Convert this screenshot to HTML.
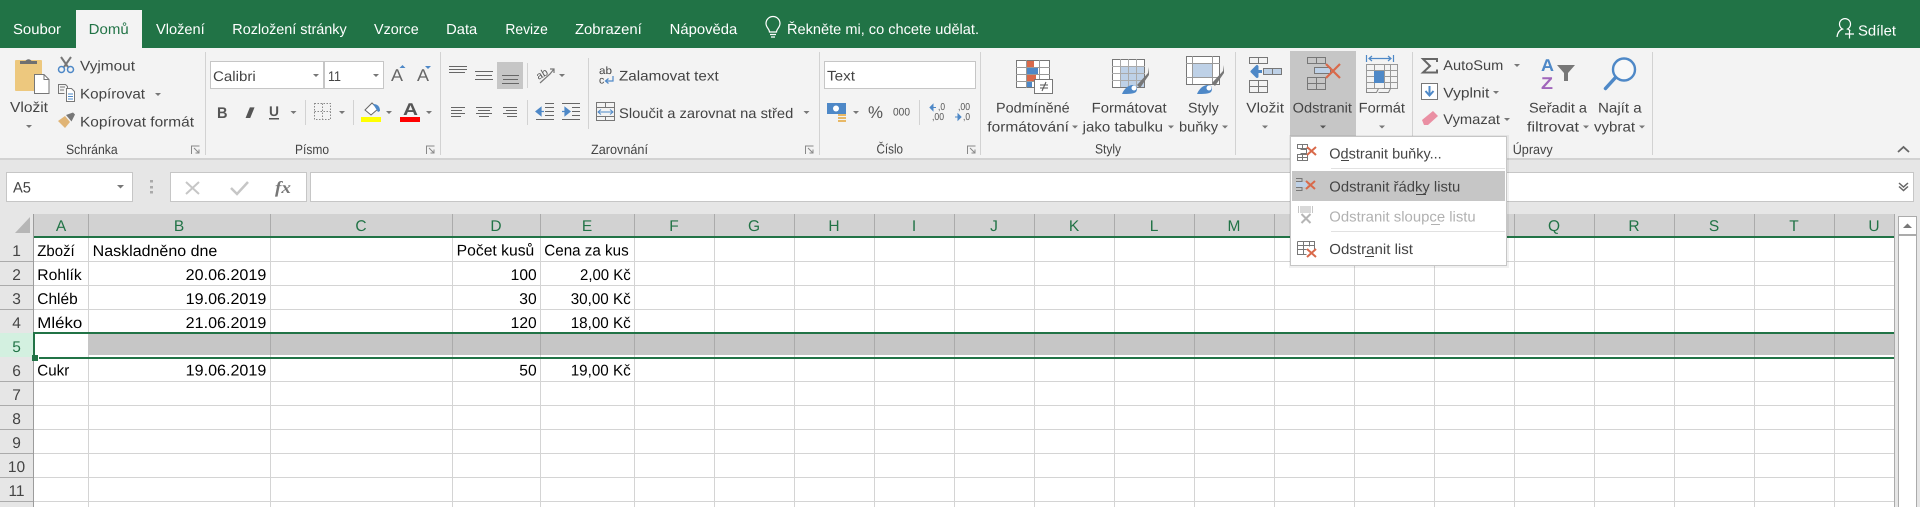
<!DOCTYPE html>
<html><head><meta charset="utf-8"><title>Excel</title>
<style>
html,body{margin:0;padding:0;background:#fff;overflow:hidden}
svg{display:block}
text{font-family:"Liberation Sans",sans-serif;font-size:14px;fill:#444}
.t{fill:#fff;font-size:14.5px}
.c{fill:#000;font-size:15.5px}
.h{fill:#217346;font-size:15.5px;text-anchor:middle}
.n{fill:#444;font-size:15.5px;text-anchor:middle}
.m{fill:#444;font-size:14.5px}
.g{fill:#777}
</style></head><body>
<svg xmlns="http://www.w3.org/2000/svg" width="1920" height="507" viewBox="0 0 1920 507" text-rendering="geometricPrecision">
<!-- title / tabs -->
<rect width="1920" height="507" fill="#fff"/>
<rect width="1920" height="48" fill="#217346"/>
<rect y="48" width="1920" height="111" fill="#f3f3f3"/>
<rect y="159" width="1920" height="55" fill="#e6e6e6"/>
<rect y="158" width="1920" height="2" fill="#d2d2d2"/>
<rect x="76" y="10" width="66" height="38" fill="#f3f3f3"/>
<text class="t" x="13" y="34" textLength="48" lengthAdjust="spacingAndGlyphs">Soubor</text>
<text class="t" x="88.7" y="34" textLength="40" lengthAdjust="spacingAndGlyphs" style="fill:#217346">Domů</text>
<text class="t" x="156" y="34" textLength="48.7" lengthAdjust="spacingAndGlyphs">Vložení</text>
<text class="t" x="232.3" y="34" textLength="114.4" lengthAdjust="spacingAndGlyphs">Rozložení stránky</text>
<text class="t" x="374" y="34" textLength="44.7" lengthAdjust="spacingAndGlyphs">Vzorce</text>
<text class="t" x="446.2" y="34" textLength="31" lengthAdjust="spacingAndGlyphs">Data</text>
<text class="t" x="505.4" y="34" textLength="42.4" lengthAdjust="spacingAndGlyphs">Revize</text>
<text class="t" x="575" y="34" textLength="66.8" lengthAdjust="spacingAndGlyphs">Zobrazení</text>
<text class="t" x="669.7" y="34" textLength="67.5" lengthAdjust="spacingAndGlyphs">Nápověda</text>
<text class="t" x="787" y="34" textLength="192" lengthAdjust="spacingAndGlyphs">Řekněte mi, co chcete udělat.</text>
<path d="M769.500 32c0-3-3.500-4.500-3.500-8.500a7 7 0 0 1 14 0c0 4-3.500 5.500-3.500 8.500zM770 34.500h6M771 37h4" fill="none" stroke="#fff" stroke-width="1.200"/>
<text class="t" x="1858" y="35.500" textLength="38" lengthAdjust="spacingAndGlyphs">Sdílet</text>
<path d="M1837 37c.5-4 2.500-7 5.500-8a5.500 5.500 0 1 1 5 0c1 .4 2 1 2.800 1.800M1845 34h9M1849.500 29.500v9" fill="none" stroke="#fff" stroke-width="1.200"/>

<!-- group separators -->
<g fill="#d2d2d2">
<rect x="205" y="52" width="1" height="103"/><rect x="440" y="52" width="1" height="103"/><rect x="819" y="52" width="1" height="103"/>
<rect x="980" y="52" width="1" height="103"/><rect x="1235" y="52" width="1" height="103"/><rect x="1412" y="52" width="1" height="103"/><rect x="1652" y="52" width="1" height="103"/>
<rect x="305" y="100" width="1" height="25"/><rect x="353" y="100" width="1" height="25"/>
<rect x="527" y="63" width="1" height="25"/><rect x="527" y="100" width="1" height="25"/><rect x="588" y="58" width="1" height="71"/><rect x="919" y="100" width="1" height="25"/>
</g>

<!-- Clipboard -->
<rect x="15" y="60" width="27" height="31" rx="1" fill="#edc87e"/>
<path d="M20 64v-3h5.500a3.500 3.500 0 0 1 6 0H37v3z" fill="#707070"/>
<path d="M34.500 74.500h9.500l5 5v14H34.500z" fill="#fff" stroke="#777"/>
<path d="M44 74.500v5h5" fill="none" stroke="#777"/>
<text x="10" y="112" textLength="38" lengthAdjust="spacingAndGlyphs" style="font-size:14.5px">Vložit</text>
<path d="M26 125h6l-3 3z" class="g"/>
<g fill="none">
<path d="M61 57l7 10M71 57l-7 10" stroke="#777" stroke-width="2"/>
<circle cx="61.500" cy="69.500" r="3" stroke="#4e88c7" stroke-width="1.500"/><circle cx="70.500" cy="69.500" r="3" stroke="#4e88c7" stroke-width="1.500"/>
<path d="M64.500 93.500h-6v-9h7l2 2v2" stroke="#777"/><path d="M60 87h5M60 90h4" stroke="#777"/>
<path d="M66.500 88.500h5l3 3v10h-8z" fill="#fff" stroke="#777"/><path d="M68 94h5M68 96.500h5M68 99h5" stroke="#4e88c7"/>
</g>
<path d="M58 121l7-5 5 6-5 6z" fill="#e0b475"/><path d="M66 115l7-2.500 2 2-3.500 7z" fill="#777"/>
<text x="80" y="70.500" textLength="55" lengthAdjust="spacingAndGlyphs">Vyjmout</text>
<text x="80" y="98.500" textLength="65" lengthAdjust="spacingAndGlyphs">Kopírovat</text>
<path d="M155 93h6l-3 3z" class="g"/>
<text x="80" y="126.500" textLength="114" lengthAdjust="spacingAndGlyphs">Kopírovat formát</text>
<text x="66" y="154" textLength="51.700" lengthAdjust="spacingAndGlyphs" style="font-size:13.500px">Schránka</text>
<path d="M191.500 154v-8h8M194 148l5 5m0-3.500v3.500h-3.500" fill="none" stroke="#888"/>

<!-- Font -->
<rect x="210.500" y="61.500" width="113" height="27" fill="#fff" stroke="#c6c6c6"/>
<rect x="324.500" y="61.500" width="59" height="27" fill="#fff" stroke="#c6c6c6"/>
<text x="213" y="81" textLength="42.700" lengthAdjust="spacingAndGlyphs">Calibri</text>
<text x="328" y="81" textLength="13" lengthAdjust="spacingAndGlyphs">11</text>
<path d="M313 74h6l-3 3zM373 74h6l-3 3z" class="g"/>
<text x="391" y="81" textLength="12" lengthAdjust="spacingAndGlyphs" style="font-size:17px;fill:#666">A</text>
<text x="417" y="81" textLength="12" lengthAdjust="spacingAndGlyphs" style="font-size:17px;fill:#666">A</text>
<path d="M399.500 68l3-3 3 3z" fill="#4e88c7"/><path d="M425 66h6l-3 3z" fill="#4e88c7"/>
<text x="217" y="118" textLength="10.500" lengthAdjust="spacingAndGlyphs" style="font-size:15.500px;font-weight:bold;fill:#555">B</text>
<text x="245" y="118" textLength="9" lengthAdjust="spacingAndGlyphs" style="font-size:15.500px;font-weight:bold;font-style:italic;fill:#555">I</text>
<text x="269" y="116" textLength="10" lengthAdjust="spacingAndGlyphs" style="font-size:14px;font-weight:bold;fill:#555">U</text>
<rect x="269" y="118" width="10" height="1.500" fill="#555"/>
<path d="M290.500 111h6l-3 3zM339 111h6l-3 3zM386 111h6l-3 3zM426 111h6l-3 3zM559 74h6l-3 3zM803.500 111h6l-3 3zM853 111h6l-3 3zM965 74h6l-3 3z" class="g"/>
<path d="M314.500 103.500h16v16h-16zM322.500 103.500v16M314.500 111.500h16" fill="none" stroke="#888" stroke-dasharray="1.500 1.500"/>
<path d="M365 110l7-7 6 6-7 6z" fill="#fff" stroke="#666"/><path d="M373 104c4 0 7 2 7 7l-2 1z" fill="#4e88c7"/>
<rect x="361" y="117" width="20" height="5" fill="#ffff00"/>
<text x="403" y="115" textLength="15" lengthAdjust="spacingAndGlyphs" style="font-size:17px;font-weight:bold;fill:#555">A</text>
<rect x="400" y="117" width="20" height="5" fill="#ff0000"/>
<text x="295" y="154" textLength="34" lengthAdjust="spacingAndGlyphs" style="font-size:13.500px">Písmo</text>
<path d="M426.500 154v-8h8M429 148l5 5m0-3.500v3.500h-3.500" fill="none" stroke="#888"/>

<!-- Alignment -->
<rect x="497" y="62" width="26" height="27" fill="#c6c6c6"/>
<g fill="none" stroke="#666">
<path d="M449 66.500h18M449 69.500h18M449 72.500h16"/>
<path d="M475 71.500h18M476 75.500h16M475 79.500h18"/>
<path d="M502 75.500h17M503 79.500h15M502 83.500h17"/>
<path d="M451 107.500h14M451 110.500h11M451 113.500h14M451 116.500h10"/>
<path d="M476 107.500h16M478 110.500h12M476 113.500h16M479 116.500h10"/>
<path d="M503 107.500h14M506 110.500h11M503 113.500h14M507 116.500h10"/>
<path d="M545 103.500h9M545 107.500h9M545 111.500h9M545 115.500h9M536 119.500h18"/>
<path d="M562 103.500h18M572 107.500h8M572 111.500h8M572 115.500h8M562 119.500h18"/>
<path d="M540 83l10-9 4-5m-4 0h4v4" stroke="#777" stroke-width="1.200"/>
</g>
<text x="536" y="78" transform="rotate(-30 541 74)" style="font-size:10.500px;fill:#555">ab</text>
<path d="M536 111.500h8M536 111.500l5-4v8z" fill="#4e88c7" stroke="#4e88c7" stroke-width="1.200"/>
<path d="M570 111.500h-8M570 111.500l-5-4v8z" fill="#4e88c7" stroke="#4e88c7" stroke-width="1.200"/>
<text x="599" y="74" textLength="13" lengthAdjust="spacingAndGlyphs" style="font-size:10.500px">ab</text>
<text x="599" y="83.500" style="font-size:10.500px">c</text>
<path d="M613 76v5h-7M608.500 78.500l-3 2.500 3 2.500" fill="none" stroke="#4e88c7" stroke-width="1.200"/>
<text x="619" y="80.700" textLength="99.700" lengthAdjust="spacingAndGlyphs">Zalamovat text</text>
<rect x="596.500" y="102.500" width="18" height="18" fill="none" stroke="#777"/>
<path d="M596.500 107.500h18M596.500 116.500h18M605.500 102.500v5M605.500 116.500v4" stroke="#777"/>
<path d="M598 112h15M601 109.500l-3 2.500 3 2.500M610 109.500l3 2.500-3 2.500" fill="none" stroke="#4e88c7"/>
<text x="619" y="118" textLength="174.300" lengthAdjust="spacingAndGlyphs">Sloučit a zarovnat na střed</text>
<text x="591" y="154" textLength="57" lengthAdjust="spacingAndGlyphs" style="font-size:13.500px">Zarovnání</text>
<path d="M805.500 154v-8h8M808 148l5 5m0-3.500v3.500h-3.500" fill="none" stroke="#888"/>

<!-- Number -->
<rect x="824.500" y="61.500" width="151" height="27" fill="#fff" stroke="#c6c6c6"/>
<text x="827" y="80.700" textLength="28" lengthAdjust="spacingAndGlyphs">Text</text>
<rect x="827" y="103" width="19" height="11" fill="#4e88c7"/><circle cx="836" cy="108.500" r="3" fill="#fff"/>
<path d="M838 115h8M838 118h8M838 121h8" stroke="#e8b866" stroke-width="2"/>
<text x="868" y="118" textLength="15" lengthAdjust="spacingAndGlyphs" style="font-size:17px;fill:#555">%</text>
<text x="893" y="115.700" textLength="17" lengthAdjust="spacingAndGlyphs" style="font-size:11px;fill:#555">000</text>
<text x="938" y="110" textLength="7" lengthAdjust="spacingAndGlyphs" style="font-size:10px;fill:#555">,0</text>
<text x="932" y="120" textLength="12" lengthAdjust="spacingAndGlyphs" style="font-size:10px;fill:#555">,00</text>
<path d="M930 107.500h6M930 107.500l3-3v6z" fill="#4e88c7" stroke="#4e88c7"/>
<text x="958" y="110" textLength="12" lengthAdjust="spacingAndGlyphs" style="font-size:10px;fill:#555">,00</text>
<text x="963" y="120" textLength="7" lengthAdjust="spacingAndGlyphs" style="font-size:10px;fill:#555">,0</text>
<path d="M955 117h6M961 117l-3-3v6z" fill="#4e88c7" stroke="#4e88c7"/>
<text x="876.500" y="153.500" textLength="26.500" lengthAdjust="spacingAndGlyphs" style="font-size:13.500px">Číslo</text>
<path d="M967.500 154v-8h8M970 148l5 5m0-3.500v3.500h-3.500" fill="none" stroke="#888"/>

<!-- Styles -->
<g>
<rect x="1016.500" y="60.500" width="33" height="27" fill="#fff" stroke="#777"/>
<rect x="1027" y="61" width="7" height="6" fill="#d9694a"/><rect x="1027" y="68" width="11" height="6" fill="#4e88c7"/><rect x="1027" y="75" width="9" height="6" fill="#d9694a"/><rect x="1027" y="82" width="5" height="5" fill="#4e88c7"/>
<path d="M1016 67.500h34M1016 74.500h34M1016 81.500h34M1026.500 60v28M1039.500 60v28" stroke="#999"/>
<rect x="1034.500" y="79.500" width="18" height="14" fill="#fff" stroke="#777"/>
<path d="M1040 85h8M1040 88h8M1046 82l-4 9" stroke="#555" fill="none"/>
<rect x="1112.500" y="59.500" width="32" height="28" fill="#fff" stroke="#777"/>
<rect x="1121" y="66" width="23" height="21" fill="#bed1e7"/>
<path d="M1112 66.500h33M1112 73.500h33M1112 80.500h33M1120.500 59v28M1128.500 59v28M1136.500 59v28" stroke="#aaa"/>
<path d="M1137 85l11-12 1-6v8l-9 13z" fill="#777"/>
<path d="M1122 94c2-5 6-9 11-9 4 0 5 4 3 7-2 2-8 2-14 2z" fill="#4e88c7"/><circle cx="1134" cy="88" r="2.500" fill="#fff"/>
<rect x="1186.500" y="56.500" width="33" height="28" fill="#fff" stroke="#777"/>
<rect x="1193" y="64" width="19" height="14" fill="#bed1e7"/>
<path d="M1186 63.500h34M1186 77.500h34M1192.500 56v28M1212.500 56v28" stroke="#999"/>
<path d="M1212 83l11-12 1-6v8l-9 13z" fill="#777"/>
<path d="M1197 94c2-5 6-9 11-9 4 0 5 4 3 7-2 2-8 2-14 2z" fill="#4e88c7"/><circle cx="1209" cy="88" r="2.500" fill="#fff"/>
</g>
<text x="996" y="112.300" textLength="73.700" lengthAdjust="spacingAndGlyphs">Podmíněné</text>
<text x="987.300" y="131.700" textLength="81.700" lengthAdjust="spacingAndGlyphs">formátování</text>
<text x="1091.700" y="112.300" textLength="75" lengthAdjust="spacingAndGlyphs">Formátovat</text>
<text x="1082.700" y="131.700" textLength="80.300" lengthAdjust="spacingAndGlyphs">jako tabulku</text>
<text x="1188" y="112.300" textLength="30.700" lengthAdjust="spacingAndGlyphs">Styly</text>
<text x="1179" y="131.700" textLength="39" lengthAdjust="spacingAndGlyphs">buňky</text>
<text x="1095" y="153.500" textLength="26" lengthAdjust="spacingAndGlyphs" style="font-size:13.500px">Styly</text>
<path d="M1072 125.500h6l-3 3zM1168 125.500h6l-3 3zM1222 125.500h6l-3 3z" class="g"/>

<!-- Cells -->
<rect x="1290" y="51" width="66" height="85" fill="#c6c6c6"/>
<g fill="none" stroke="#777">
<path d="M1249.500 57.500h18v6h-18zM1258.500 57.500v6"/>
<path d="M1263.500 68.500h18v6h-18z" fill="#bed1e7"/><path d="M1272.500 68.500v6"/>
<path d="M1249.500 80.500h18v12h-18zM1249.500 86.500h18M1258.500 80.500v12"/>
<path d="M1307.500 57.500h18v6h-18zM1316.500 57.500v6" />
<path d="M1314.500 67.500h16v6h-16z" fill="#bed1e7"/>
<path d="M1307.500 77.500h18v12h-18zM1307.500 83.500h18M1316.500 77.500v12"/>
<path d="M1366.500 64.500h31v24h-31zM1366.500 70.500h31M1366.500 76.500h31M1366.500 82.500h31M1374.500 64.500v24M1384.500 64.500v24M1390.500 64.500v24" stroke="#999"/>
<path d="M1366.500 88.500v4h10l2-4m4 0h8l-2 4h-10" stroke="#888"/>
</g>
<path d="M1262 71.500h-10M1252 71.500l5-5v10z" fill="#4e88c7" stroke="#4e88c7" stroke-width="3" stroke-linejoin="round"/>
<path d="M1326 64l14 14M1340 64l-14 14" stroke="#d9694a" stroke-width="2.200"/>
<rect x="1374" y="71" width="10" height="12" fill="#4e88c7"/>
<path d="M1366.500 55v7M1393.500 55v7M1369 58.500h22M1372 56l-3 2.500 3 2.500M1388 56l3 2.500-3 2.500" fill="none" stroke="#4e88c7" stroke-width="1.200"/>
<text x="1246.300" y="112.300" textLength="37.700" lengthAdjust="spacingAndGlyphs">Vložit</text>
<text x="1292.700" y="112.300" textLength="59.300" lengthAdjust="spacingAndGlyphs">Odstranit</text>
<text x="1358.700" y="112.300" textLength="46.300" lengthAdjust="spacingAndGlyphs">Formát</text>
<path d="M1262 125.500h6l-3 3zM1379 125.500h6l-3 3z" class="g"/>
<path d="M1320 125.500h6l-3 3z" fill="#555"/>

<!-- Editing -->
<path d="M1437 62v-3h-14l7 7-7 6.500h14v-3" fill="none" stroke="#666" stroke-width="2"/>
<text x="1443.300" y="70" textLength="60" lengthAdjust="spacingAndGlyphs">AutoSum</text>
<path d="M1514 64h6l-3 3z" class="g"/>
<rect x="1421.500" y="83.500" width="16" height="16" fill="#fff" stroke="#777"/>
<path d="M1429.500 86v9M1425.500 91l4 4.500 4-4.500" fill="none" stroke="#4e88c7" stroke-width="2"/>
<text x="1443.300" y="97.300" textLength="46" lengthAdjust="spacingAndGlyphs">Vyplnit</text>
<path d="M1493 91h6l-3 3z" class="g"/>
<path d="M1422 120l11-9 5 5-10 9h-4z" fill="#ea8fa3"/>
<text x="1443.300" y="124" textLength="56.700" lengthAdjust="spacingAndGlyphs">Vymazat</text>
<path d="M1504 118h6l-3 3z" class="g"/>
<text x="1541" y="71" textLength="13" lengthAdjust="spacingAndGlyphs" style="font-size:17px;font-weight:bold;fill:#4e88c7">A</text>
<text x="1541" y="89" textLength="12" lengthAdjust="spacingAndGlyphs" style="font-size:17px;font-weight:bold;fill:#a066bb">Z</text>
<path d="M1557 65h18l-7 8v8h-4v-8z" fill="#777"/>
<text x="1529" y="112.300" textLength="58" lengthAdjust="spacingAndGlyphs">Seřadit a</text>
<text x="1527" y="131.700" textLength="52" lengthAdjust="spacingAndGlyphs">filtrovat</text>
<path d="M1583 125.500h6l-3 3z" class="g"/>
<circle cx="1624" cy="69.500" r="11" fill="#fff" fill-opacity=".4" stroke="#4e88c7" stroke-width="2.400"/>
<path d="M1615.500 77.500l-10 11" stroke="#4e88c7" stroke-width="3.500" stroke-linecap="round"/>
<text x="1598" y="112.300" textLength="43.700" lengthAdjust="spacingAndGlyphs">Najít a</text>
<text x="1594" y="131.700" textLength="41" lengthAdjust="spacingAndGlyphs">vybrat</text>
<path d="M1639 125.500h6l-3 3z" class="g"/>
<text x="1512.700" y="154" textLength="40" lengthAdjust="spacingAndGlyphs" style="font-size:13.500px">Úpravy</text>
<path d="M1898 152l5.500-5 5.500 5" fill="none" stroke="#666" stroke-width="1.800"/>

<!-- formula bar -->
<rect x="6.500" y="172.500" width="126" height="29" fill="#fff" stroke="#c6c6c6"/>
<text x="13" y="192.700" textLength="18" lengthAdjust="spacingAndGlyphs" style="font-size:15px">A5</text>
<path d="M117 185h7l-3.500 3.500z" class="g"/>
<path d="M151.500 180v2.500M151.500 186v2.500M151.500 191v2.500" stroke="#aaa" stroke-width="3"/>
<rect x="170.500" y="172.500" width="136" height="29" fill="#fff" stroke="#c6c6c6"/>
<path d="M186 182l13 12M199 182l-13 12" stroke="#c6c6c6" stroke-width="2"/>
<path d="M231 188l6 6 11-12" fill="none" stroke="#c6c6c6" stroke-width="2.500"/>
<text x="275" y="193" textLength="16" lengthAdjust="spacingAndGlyphs" style="font-family:'Liberation Serif',serif;font-size:17px;font-style:italic;font-weight:bold;fill:#777">fx</text>
<rect x="310.500" y="172.500" width="1603" height="29" fill="#fff" stroke="#c6c6c6"/>
<path d="M1899 183l4.500 4 4.500-4M1899 186.500l4.500 4 4.500-4" fill="none" stroke="#666" stroke-width="1.500"/>

<!-- grid headers -->
<rect x="34" y="214" width="1860" height="22" fill="#d2d2d2"/>
<rect x="0" y="214" width="33" height="293" fill="#e6e6e6"/>
<rect x="33" y="214" width="1" height="293" fill="#9c9c9c"/>
<path d="M30 217v16H15z" fill="#b6b6b6"/>
<!-- vertical gridlines -->
<g fill="#d4d4d4">
<rect x="88" y="238" width="1" height="269"/><rect x="270" y="238" width="1" height="269"/><rect x="452" y="238" width="1" height="269"/><rect x="540" y="238" width="1" height="269"/><rect x="634" y="238" width="1" height="269"/>
<rect x="714" y="238" width="1" height="269"/><rect x="794" y="238" width="1" height="269"/><rect x="874" y="238" width="1" height="269"/><rect x="954" y="238" width="1" height="269"/><rect x="1034" y="238" width="1" height="269"/><rect x="1114" y="238" width="1" height="269"/><rect x="1194" y="238" width="1" height="269"/><rect x="1274" y="238" width="1" height="269"/><rect x="1354" y="238" width="1" height="269"/><rect x="1434" y="238" width="1" height="269"/><rect x="1514" y="238" width="1" height="269"/><rect x="1594" y="238" width="1" height="269"/><rect x="1674" y="238" width="1" height="269"/><rect x="1754" y="238" width="1" height="269"/><rect x="1834" y="238" width="1" height="269"/>
<rect x="34" y="261" width="1860" height="1"/><rect x="34" y="285" width="1860" height="1"/><rect x="34" y="309" width="1860" height="1"/><rect x="34" y="381" width="1860" height="1"/><rect x="34" y="405" width="1860" height="1"/><rect x="34" y="429" width="1860" height="1"/><rect x="34" y="453" width="1860" height="1"/><rect x="34" y="477" width="1860" height="1"/><rect x="34" y="501" width="1860" height="1"/>
</g>
<g fill="#ababab">
<rect x="88" y="214" width="1" height="22"/><rect x="270" y="214" width="1" height="22"/><rect x="452" y="214" width="1" height="22"/><rect x="540" y="214" width="1" height="22"/><rect x="634" y="214" width="1" height="22"/><rect x="714" y="214" width="1" height="22"/><rect x="794" y="214" width="1" height="22"/><rect x="874" y="214" width="1" height="22"/><rect x="954" y="214" width="1" height="22"/><rect x="1034" y="214" width="1" height="22"/><rect x="1114" y="214" width="1" height="22"/><rect x="1194" y="214" width="1" height="22"/><rect x="1274" y="214" width="1" height="22"/><rect x="1514" y="214" width="1" height="22"/><rect x="1594" y="214" width="1" height="22"/><rect x="1674" y="214" width="1" height="22"/><rect x="1754" y="214" width="1" height="22"/><rect x="1834" y="214" width="1" height="22"/>
<rect x="0" y="261" width="33" height="1"/><rect x="0" y="285" width="33" height="1"/><rect x="0" y="309" width="33" height="1"/><rect x="0" y="381" width="33" height="1"/><rect x="0" y="405" width="33" height="1"/><rect x="0" y="429" width="33" height="1"/><rect x="0" y="453" width="33" height="1"/><rect x="0" y="477" width="33" height="1"/><rect x="0" y="501" width="33" height="1"/>
</g>
<!-- row 5 selection -->
<rect x="0" y="333" width="33" height="24" fill="#d3f0e0"/>
<rect x="33" y="333" width="2" height="25" fill="#217346"/>
<rect x="88" y="334" width="1806" height="21" fill="#c6c6c6"/>
<g fill="#ababab"><rect x="270" y="334" width="1" height="21"/><rect x="452" y="334" width="1" height="21"/><rect x="540" y="334" width="1" height="21"/><rect x="634" y="334" width="1" height="21"/><rect x="714" y="334" width="1" height="21"/><rect x="794" y="334" width="1" height="21"/><rect x="874" y="334" width="1" height="21"/><rect x="954" y="334" width="1" height="21"/><rect x="1034" y="334" width="1" height="21"/><rect x="1114" y="334" width="1" height="21"/><rect x="1194" y="334" width="1" height="21"/><rect x="1274" y="334" width="1" height="21"/><rect x="1354" y="334" width="1" height="21"/><rect x="1434" y="334" width="1" height="21"/><rect x="1514" y="334" width="1" height="21"/><rect x="1594" y="334" width="1" height="21"/><rect x="1674" y="334" width="1" height="21"/><rect x="1754" y="334" width="1" height="21"/><rect x="1834" y="334" width="1" height="21"/></g>
<rect x="34" y="236" width="1860" height="2" fill="#217346"/>
<rect x="33" y="332" width="1861" height="2" fill="#217346"/>
<rect x="33" y="357" width="1861" height="2" fill="#217346"/>
<rect x="32" y="355" width="6" height="6" fill="#217346"/><rect x="38" y="357" width="1" height="2" fill="#fff"/>
<rect x="1894" y="214" width="1" height="293" fill="#ababab"/>

<text class="h" x="61" y="231">A</text><text class="h" x="179" y="231">B</text><text class="h" x="361" y="231">C</text><text class="h" x="496" y="231">D</text><text class="h" x="587" y="231">E</text><text class="h" x="674" y="231">F</text><text class="h" x="754" y="231">G</text><text class="h" x="834" y="231">H</text><text class="h" x="914" y="231">I</text><text class="h" x="994" y="231">J</text><text class="h" x="1074" y="231">K</text><text class="h" x="1154" y="231">L</text><text class="h" x="1234" y="231">M</text><text class="h" x="1554" y="231">Q</text><text class="h" x="1634" y="231">R</text><text class="h" x="1714" y="231">S</text><text class="h" x="1794" y="231">T</text><text class="h" x="1874" y="231">U</text>

<text class="n" x="16.500" y="256">1</text><text class="n" x="16.500" y="280">2</text><text class="n" x="16.500" y="304">3</text><text class="n" x="16.500" y="328">4</text><text class="n" x="16.500" y="352" style="fill:#217346">5</text><text class="n" x="16.500" y="376">6</text><text class="n" x="16.500" y="400">7</text><text class="n" x="16.500" y="424">8</text><text class="n" x="16.500" y="448">9</text><text class="n" x="16.500" y="472">10</text><text class="n" x="16.500" y="496">11</text>

<text class="c" x="37.300" y="256" textLength="37.400" lengthAdjust="spacingAndGlyphs">Zboží</text>
<text class="c" x="92.700" y="256" textLength="124.600" lengthAdjust="spacingAndGlyphs">Naskladněno dne</text>
<text class="c" x="456.700" y="255.500" textLength="77.600" lengthAdjust="spacingAndGlyphs">Počet kusů</text>
<text class="c" x="544.300" y="255.500" textLength="84.400" lengthAdjust="spacingAndGlyphs">Cena za kus</text>
<text class="c" x="37.300" y="280" textLength="44.400" lengthAdjust="spacingAndGlyphs">Rohlík</text>
<text class="c" x="185.700" y="280" textLength="80.600" lengthAdjust="spacingAndGlyphs">20.06.2019</text>
<text class="c" x="510.700" y="280" textLength="26" lengthAdjust="spacingAndGlyphs">100</text>
<text class="c" x="580" y="280" textLength="50.700" lengthAdjust="spacingAndGlyphs">2,00 Kč</text>
<text class="c" x="37.300" y="304" textLength="40.400" lengthAdjust="spacingAndGlyphs">Chléb</text>
<text class="c" x="185.700" y="304" textLength="80.600" lengthAdjust="spacingAndGlyphs">19.06.2019</text>
<text class="c" x="519.300" y="304" textLength="17.400" lengthAdjust="spacingAndGlyphs">30</text>
<text class="c" x="570.700" y="304" textLength="60" lengthAdjust="spacingAndGlyphs">30,00 Kč</text>
<text class="c" x="37.300" y="328" textLength="45" lengthAdjust="spacingAndGlyphs">Mléko</text>
<text class="c" x="185.700" y="328" textLength="80.600" lengthAdjust="spacingAndGlyphs">21.06.2019</text>
<text class="c" x="510.700" y="328" textLength="26" lengthAdjust="spacingAndGlyphs">120</text>
<text class="c" x="570.700" y="328" textLength="60" lengthAdjust="spacingAndGlyphs">18,00 Kč</text>
<text class="c" x="37.300" y="375.500" textLength="32" lengthAdjust="spacingAndGlyphs">Cukr</text>
<text class="c" x="185.700" y="375.500" textLength="80.600" lengthAdjust="spacingAndGlyphs">19.06.2019</text>
<text class="c" x="519.300" y="375.500" textLength="17.400" lengthAdjust="spacingAndGlyphs">50</text>
<text class="c" x="570.700" y="375.500" textLength="60" lengthAdjust="spacingAndGlyphs">19,00 Kč</text>

<!-- scrollbar -->
<rect x="1895" y="214" width="25" height="293" fill="#e6e6e6"/>
<rect x="1898.500" y="216.500" width="18" height="18" fill="#fff" stroke="#ababab"/>
<path d="M1903 228l4.500-4.500 4.500 4.500z" fill="#777"/>
<rect x="1898.500" y="235.500" width="18" height="280" fill="#fff" stroke="#ababab"/>

<!-- dropdown menu -->
<rect x="1289" y="135" width="220" height="133" fill="#000" fill-opacity=".06"/>
<rect x="1290.500" y="136.500" width="216" height="129" fill="#fff" stroke="#c6c6c6"/>
<rect x="1292" y="171" width="213" height="30" fill="#c6c6c6"/>
<rect x="1331" y="168" width="174" height="1" fill="#e1e1e1"/>
<rect x="1331" y="231" width="174" height="1" fill="#e1e1e1"/>
<rect x="1296" y="182" width="11" height="5" fill="#bed1e7"/>
<rect x="1300" y="206" width="11" height="7" fill="#d9d9d9"/>
<g fill="none" stroke="#777">
<path d="M1297.500 144.500h10v4h-10zM1302.500 144.500v4M1300.500 149.500h6v4h-6M1297.500 154.500h10v6h-10zM1302.500 154.500v6M1297.500 157.500h10"/>
<path d="M1296 178.500h6v3h-6M1296 187.500h6v3h-6"/>
<path d="M1298.500 206v7M1312.500 206v7" stroke="#c6c6c6"/>
<path d="M1297.500 241.500h17v9M1297.500 241.500v13h9M1297.500 245.500h17M1297.500 249.500h9M1303.500 241.500v13M1309.500 241.500v5"/>
</g>
<path d="M1307 147l9 8M1316 147l-9 8M1306 181l9 8M1315 181l-9 8M1307 249l9 8M1316 249l-9 8" stroke="#d9694a" stroke-width="2"/>
<path d="M1301.500 214l9 9M1310.500 214l-9 9" stroke="#b5b5b5" stroke-width="2"/>
<text class="m" x="1329.300" y="158.300" textLength="112.400" lengthAdjust="spacingAndGlyphs">Odstranit buňky...</text>
<text class="m" x="1329.300" y="191.700" textLength="131" lengthAdjust="spacingAndGlyphs">Odstranit řádky listu</text>
<text class="m" x="1329.300" y="221.700" textLength="146.400" lengthAdjust="spacingAndGlyphs" style="fill:#b1b1b1">Odstranit sloupce listu</text>
<text class="m" x="1329.300" y="254" textLength="83.700" lengthAdjust="spacingAndGlyphs">Odstranit list</text>
<rect x="1341" y="160" width="8" height="1" fill="#444"/>
<rect x="1416" y="194" width="10" height="1" fill="#444"/>
<rect x="1431" y="224" width="9" height="1" fill="#b1b1b1"/>
<rect x="1365" y="256" width="9" height="1" fill="#444"/>
</svg>
</body></html>
